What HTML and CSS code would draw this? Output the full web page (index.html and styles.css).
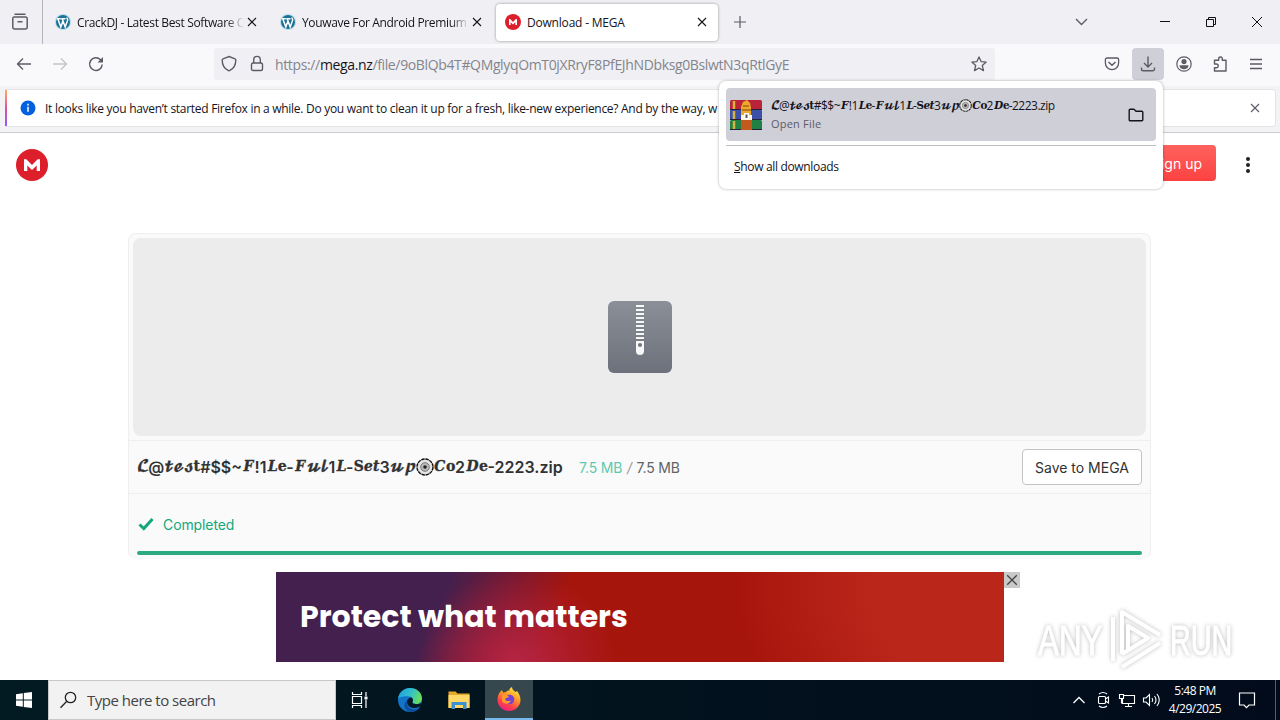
FILE: index.html
```
<!DOCTYPE html>
<html lang="en">
<head>
  <meta charset="UTF-8" />
  <title>Download - MEGA</title>
  <meta name="viewport" content="width=device-width, initial-scale=1" />
  <link rel="stylesheet" href="styles.css">
</head>
<body>
  <svg class="defs" width="0" height="0">
    <symbol id="wp" viewBox="0 0 16 16">
      <circle cx="8" cy="8" r="8" fill="#b9dbe8"/>
      <circle cx="8" cy="8" r="7" fill="#1b7296"/>
      <path d="M1.8 4.8h4M6.2 4.8h4.3M2.8 4.8l3 8.2 2.2-6.3M7.2 4.8l3 8.2 2.4-6.6c.3-1.2-.7-2-.7-2.800" fill="none" stroke="#fff" stroke-width="1.5"/>
    </symbol>
    <symbol id="mega" viewBox="0 0 32 32">
      <circle cx="16" cy="16" r="16" fill="#dd1f2b"/>
      <path d="M8 22V10.200h2.300L16 16l5.700-5.800H24V22h-3.300v-5.600L16 21l-4.700-4.600V22z" fill="#fff"/>
    </symbol>
    <symbol id="close" viewBox="0 0 10 10">
      <path d="M1 1l8 8M9 1L1 9" fill="none" stroke="currentColor" stroke-width="1.100"/>
    </symbol>
    <symbol id="gear" viewBox="0 0 18 18">
      <circle cx="9" cy="9" r="8" fill="#e4e4e4" stroke="#111" stroke-width="1.400" stroke-dasharray="3.500 .7"/>
      <circle cx="9" cy="9" r="4.300" fill="#bbb" stroke="#777"/>
      <circle cx="9" cy="9" r="1.800" fill="#222"/>
    </symbol>
  </svg>

  <div class="tabstrip">
    <div class="firefox-view">
      <svg width="18" height="18" viewBox="0 0 18 18" fill="none" stroke="#5b5b66" stroke-width="1.500"><path d="M3.500 1.300h11M1.800 5.500a1.500 1.500 0 0 1 1.500-1.500h11.400a1.500 1.500 0 0 1 1.500 1.500V14a2 2 0 0 1-2 2H3.800a2 2 0 0 1-2-2zM6.500 8.700h5"/></svg>
    </div>
    <div class="tab">
      <svg class="favicon"><use href="#wp"/></svg>
      <span class="tab-title faded">CrackDJ - Latest Best Software C</span>
      <svg class="tab-close"><use href="#close"/></svg>
    </div>
    <div class="tab">
      <svg class="favicon"><use href="#wp"/></svg>
      <span class="tab-title faded">Youwave For Android Premium</span>
      <svg class="tab-close"><use href="#close"/></svg>
    </div>
    <div class="tab active">
      <svg class="favicon"><use href="#mega"/></svg>
      <span class="tab-title">Download - MEGA</span>
      <svg class="tab-close"><use href="#close"/></svg>
    </div>
    <svg class="new-tab" width="12" height="12" viewBox="0 0 12 12"><path d="M6 0v12M0 6h12" stroke="#5b5b66" stroke-width="1.200"/></svg>
    <div class="window-buttons">
      <svg width="46" height="44" viewBox="0 0 46 44" fill="none" stroke="#5b5b66" stroke-width="1.400"><path d="M17 19l5.500 5.500L28 19"/></svg>
      <svg class="min" width="46" height="44" viewBox="0 0 46 44" stroke="#111"><path d="M18 21.500h10"/></svg>
      <svg width="46" height="44" viewBox="0 0 46 44" fill="none" stroke="#111"><path d="M18.500 19.500h7v7h-7zM20.500 19.500v-2h7v7h-2"/></svg>
      <svg width="46" height="44" viewBox="0 0 46 44" stroke="#111"><path d="M18 17l10 10M28 17L18 27"/></svg>
    </div>
  </div>

  <div class="navbar">
    <div class="nav-buttons">
      <svg width="16" height="16" viewBox="0 0 16 16" fill="none" stroke="#5b5b66" stroke-width="1.300"><path d="M15 8H1.500M7 2.500L1.500 8 7 13.500"/></svg>
      <svg width="16" height="16" viewBox="0 0 16 16" fill="none" stroke="#c3c3c8" stroke-width="1.300"><path d="M1 8h13.500M9 2.500l5.500 5.500L9 13.500"/></svg>
      <svg width="16" height="16" viewBox="0 0 16 16" fill="none" stroke="#5b5b66" stroke-width="1.500"><path d="M14.200 8.500A6.300 6.300 0 1 1 12.500 3.800L14 5.500"/><path d="M15 1v5.500H9.500z" fill="#5b5b66" stroke="none"/></svg>
    </div>
    <div class="urlbar">
      <svg width="16" height="18" viewBox="0 0 16 18" fill="none" stroke="#5b5b66" stroke-width="1.400"><path d="M8 1.500l6 2.300c.6.200.8.600.8 1.100 0 5-2.200 8.800-6.300 10.800q-.5.200-1 0C3.400 13.700 1.200 9.900 1.200 4.900c0-.5.200-.9.800-1.100z"/></svg>
      <svg width="14" height="18" viewBox="0 0 14 18" fill="none" stroke="#5b5b66" stroke-width="1.400"><rect x="1.500" y="8" width="11" height="7.500" rx="1.500"/><path d="M3.700 8V4.700a3.300 3.300 0 0 1 6.600 0V8"/></svg>
      <span class="url">https://<b>mega.nz</b>/file/9oBlQb4T#QMglyqOmT0jXRryF8PfEJhNDbksg0BslwtN3qRtlGyE</span>
      <svg class="star" width="16" height="16" viewBox="0 0 16 16" fill="none" stroke="#5b5b66" stroke-width="1.300" stroke-linejoin="round"><path d="M8 .9l2.100 4.700 5.100.5-3.900 3.400 1.200 5.100L8 12l-4.500 2.600 1.200-5.100L.8 6.100l5.100-.5z"/></svg>
    </div>
    <div class="toolbar">
      <span><svg width="16" height="16" viewBox="0 0 16 16" fill="none" stroke="#5b5b66" stroke-width="1.300"><path d="M3 2h10a1.600 1.600 0 0 1 1.600 1.600V7A6.600 6.600 0 0 1 1.400 7V3.600A1.600 1.600 0 0 1 3 2z"/><path d="M4.500 6L8 9.300 11.500 6" stroke-width="1.500"/></svg></span>
      <span class="pressed"><svg width="16" height="16" viewBox="0 0 16 16" fill="none" stroke="#5b5b66" stroke-width="1.400"><path d="M8 .5v10M4 7l4 4 4-4M1.500 11.500V13A1.800 1.800 0 0 0 3.300 14.800h9.400a1.800 1.800 0 0 0 1.800-1.800v-1.500"/></svg></span>
      <span><svg width="16" height="16" viewBox="0 0 16 16"><circle cx="8" cy="8" r="7.200" fill="none" stroke="#5b5b66" stroke-width="1.200"/><circle cx="8" cy="5.600" r="2.600" fill="#5b5b66"/><path d="M3.500 9.200h9c0 2.400-2 4-4.500 4s-4.500-1.600-4.500-4z" fill="#5b5b66"/></svg></span>
      <span><svg width="16" height="16" viewBox="0 0 16 16" fill="none" stroke="#5b5b66" stroke-width="1.400" stroke-linejoin="round"><path d="M2.500 7V4.300h4.200V2.800a1.800 1.800 0 0 1 3.600 0v1.500H14V15H2.500v-3.200h1.800a1.900 1.900 0 0 0 0-3.800H2.500z"/></svg></span>
      <span><svg width="14" height="14" viewBox="0 0 14 14" stroke="#5b5b66" stroke-width="1.300"><path d="M1 2.500h12M1 7h12M1 11.500h12"/></svg></span>
    </div>
  </div>

  <div class="notice-wrap">
    <div class="notice">
      <svg width="16" height="16" viewBox="0 0 16 16"><circle cx="8" cy="8" r="7.500" fill="#0560df"/><path d="M8 6.800v5M8 3.700v1.700" stroke="#fff" stroke-width="1.500"/></svg>
      <span class="notice-text">It looks like you haven’t started Firefox in a while. Do you want to clean it up for a fresh, like-new experience? And by the way, w</span>
      <svg class="notice-close"><use href="#close"/></svg>
    </div>
  </div>

  <div class="page">
    <div class="page-header">
      <svg class="logo"><use href="#mega"/></svg>
      <div class="header-right">
        <div class="signup">Sign up</div>
        <svg width="6" height="18" viewBox="0 0 6 18" fill="#222"><circle cx="3" cy="3" r="2"/><circle cx="3" cy="9" r="2"/><circle cx="3" cy="15" r="2"/></svg>
      </div>
    </div>

    <div class="card">
      <div class="preview">
        <svg width="64" height="72" viewBox="0 0 64 72">
          <defs><linearGradient id="zg" x1="0" y1="0" x2="0" y2="1"><stop offset="0" stop-color="#8b8f97"/><stop offset="1" stop-color="#6c717b"/></linearGradient></defs>
          <rect width="64" height="72" rx="6" fill="url(#zg)"/>
          <path d="M32 4v36" stroke="#f7f7f8" stroke-width="8" stroke-dasharray="2 2"/>
          <path d="M28 40h8v10a4 4 0 0 1-8 0z" fill="#f7f7f8"/>
          <circle cx="32" cy="44" r="2" fill="#6f747d"/>
        </svg>
      </div>
      <div class="file-row">
        <span class="file-name"><i>𝓛</i>@<i>𝓽𝓮𝓼𝐭</i>#$$~<i>𝑭</i>!1<i>𝑳𝐞</i>-<i>𝑭𝓾𝓵</i>1<i>𝑳</i>-<i>𝐒𝒆𝒕</i>3<i>𝓾𝓹</i><svg class="gear"><use href="#gear"/></svg><i>𝑪𝐨</i>2<i>𝑫𝐞</i>-2223.zip</span>
        <span class="file-size"><em>7.5 MB</em> <i>/</i> 7.5 MB</span>
        <div class="save">Save to MEGA</div>
      </div>
      <div class="status">
        <svg width="16" height="14" viewBox="0 0 16 14" fill="none" stroke="#12a87c" stroke-width="3"><path d="M1.500 7.500l4.300 4L14.500 2"/></svg>
        <span>Completed</span>
      </div>
      <div class="progress"></div>
    </div>

    <div class="ad">
      <div class="banner">Protect what matters</div>
      <div class="ad-close"><svg width="12" height="12" viewBox="0 0 10 10"><use href="#close"/></svg></div>
    </div>
  </div>

  <div class="watermark">
    <span class="any">ANY</span>
    <svg width="58" height="64" viewBox="0 0 58 64" fill="none" stroke="#fff" stroke-width="4" stroke-linejoin="round"><path d="M15 46V4l38 23M15 46l26-16L21 18v24M6 9v44M15 59l38-24"/></svg>
    <span class="run">RUN</span>
  </div>

  <div class="downloads">
    <div class="download-item">
      <svg width="32" height="32" viewBox="0 0 32 32">
        <rect y="1" width="32" height="10" rx="1.500" fill="#b92438"/>
        <rect y="11" width="32" height="10" rx="1" fill="#3c50a8"/>
        <rect y="21" width="32" height="10" rx="1.500" fill="#218044"/>
        <path d="M4 2v8M4 12v8M4 22v8" stroke="#d8b23c" stroke-width="2.500"/>
        <path d="M0 10.500h32M0 20.500h32M0 30.500h32" stroke="#25203a"/>
        <path d="M11 20h11v11H11z" fill="#c35a1d"/>
        <path d="M13 3l4-2 3 3 1 5v8H11V8z" fill="#edaa28"/>
        <path d="M13 6h6v2h-6zM12 10h9v2h-9z" fill="#b77522"/>
        <path d="M11 16h11v5H11z" fill="#fff3dc"/>
        <path d="M14 14h5v6h-5z" fill="#fff"/>
        <path d="M15.500 15.500h2V19h-2z" fill="#555"/>
      </svg>
      <div class="download-text">
        <span class="download-name"><i>𝓛</i>@<i>𝓽𝓮𝓼𝐭</i>#$$~<i>𝑭</i>!1<i>𝑳𝐞</i>-<i>𝑭𝓾𝓵</i>1<i>𝑳</i>-<i>𝐒𝒆𝒕</i>3<i>𝓾𝓹</i><svg class="gear"><use href="#gear"/></svg><i>𝑪𝐨</i>2<i>𝑫𝐞</i>-2223.zip</span>
        <span class="download-open">Open File</span>
      </div>
      <svg class="folder" width="16" height="16" viewBox="0 0 16 16" fill="none" stroke="#15141a" stroke-width="1.400" stroke-linejoin="round"><path d="M1.200 3.200a1 1 0 0 1 1-1H6l2 2h5.800a1 1 0 0 1 1 1v7.500a1 1 0 0 1-1 1H2.200a1 1 0 0 1-1-1z"/></svg>
    </div>
    <div class="show-all"><u>S</u>how all downloads</div>
  </div>

  <div class="taskbar">
    <div class="start"><svg width="16" height="16" viewBox="0 0 16 16" fill="#fff"><path d="M0 2.200l6.800-1v6.300H0zM7.800 1L16 0v7.500H7.800zM0 8.500h6.800v6.300L0 13.800zM7.800 8.500H16V16l-8.200-1z"/></svg></div>
    <div class="search">
      <svg width="18" height="18" viewBox="0 0 18 18" fill="none" stroke="#222" stroke-width="1.300"><circle cx="10.500" cy="6.500" r="5.200"/><path d="M6.800 10.300L.5 16.800"/></svg>
      <span>Type here to search</span>
    </div>
    <div class="task"><svg width="18" height="18" viewBox="0 0 18 18" fill="none" stroke="#fff" stroke-width="1.200"><path d="M1.500 5.500h9v7h-9zM1.500 1v2.500h9V1M1.500 17v-2.500h9V17M15 1v4M15 9v8"/><path d="M13.500 5.500h3v3h-3z" fill="#fff" stroke="none"/></svg></div>
    <div class="task"><svg width="24" height="24" viewBox="0 0 24 24">
      <defs>
        <linearGradient id="eg" x1="0" y1="0" x2="1" y2=".3"><stop offset="0" stop-color="#1b9de2"/><stop offset=".6" stop-color="#35c1c8"/><stop offset="1" stop-color="#66dd62"/></linearGradient>
      </defs>
      <circle cx="12" cy="12" r="12" fill="#1373c9"/>
      <path d="M0 11C1 4 6 0 12 0c7 0 12 5 12 10.500 0 3.500-3 5.500-6 5.500-2.500 0-4-1-3.500-2 1-1.500.5-5-3.500-5.500C6 8 1 9 0 11z" fill="url(#eg)"/>
      <path d="M9 12c-1.500 5 2 9.500 7 9.500 2.500 0 4.500-1 6-2-2.500 3.500-6 4.500-10 4.500-5-1.500-8-7-3-12z" fill="#0c4d9c"/>
      <path d="M14.500 14c1-1.500.5-3.500-1-4.500-3 0-5 2.500-4.300 5.500C10 19 14 20.500 18 19.800c2-.3 4-1.300 5-2.300l1-3c-1.500 1-3.500 2-6 1.500-2.500 0-4-1-3.500-2z" fill="#041b27"/>
    </svg></div>
    <div class="task"><svg width="22" height="20" viewBox="0 0 22 20"><path d="M.5 1.500h7l2 2h12V18H.5z" fill="#e9a82c"/><path d="M.5 5h21v13H.5z" fill="#ffd868"/><path d="M3.500 19v-7h15v7h-3.500v-4H7v4z" fill="#3d91d1"/></svg></div>
    <div class="task running"><svg width="24" height="24" viewBox="0 0 24 24">
      <defs><linearGradient id="fg" x1=".8" y1="0" x2=".3" y2="1"><stop offset="0" stop-color="#fff04a"/><stop offset=".4" stop-color="#ff9a26"/><stop offset=".75" stop-color="#ff3f4c"/><stop offset="1" stop-color="#e3228a"/></linearGradient></defs>
      <path d="M3 5l2-2 1 2.500L9 5c1-1 2-1.500 3.500-1.700C12 2 13.500.8 15 0c0 2.500 2 3.500 3.500 5L20 4c2 2.500 3.500 5.500 3.500 9A11.500 11 0 1 1 .5 13C.5 9.500 1.500 7 3 5z" fill="url(#fg)"/>
      <circle cx="12.500" cy="12.500" r="4.800" fill="#7542d8"/>
      <path d="M5 8c3-1 5 0 7 1.500-1 1.500-3 1-4 2.500 1 2.500 4 2.500 6 1.500-1.500 4-6.500 4-9 1z" fill="#ff982d"/>
    </svg></div>
    <div class="tray">
      <svg width="24" height="24" viewBox="0 0 24 24" fill="none" stroke="#fff" stroke-width="1.300"><path d="M6.500 15L12 9.500l5.500 5.500"/></svg>
      <svg width="24" height="24" viewBox="0 0 24 24" fill="none" stroke="#fff" stroke-width="1.100"><rect x="7.500" y="8.500" width="7" height="7" rx="1"/><path d="M14.500 11l3-2v6l-3-2M8 6q4-3 8 0M8 18q4 3 8 0"/></svg>
      <svg width="24" height="24" viewBox="0 0 24 24" fill="none" stroke="#fff" stroke-width="1.100"><path d="M8.500 7.500h11v8h-12V11M13.500 15.500v3M10 18.500h7M4.500 6.500h4v4h-4zM6.500 10.500v5"/></svg>
      <svg width="24" height="24" viewBox="0 0 24 24" fill="none" stroke="#fff" stroke-width="1.100"><path d="M4.500 10h2.500l3.500-3.500v11L7 14H4.500zM13 10q1.500 2 0 4M15.500 8q3 4 0 8M18 6q4.500 6 0 12"/></svg>
      <div class="clock"><span>5:48 PM</span><span>4/29/2025</span></div>
      <svg class="action" width="18" height="18" viewBox="0 0 18 18" fill="none" stroke="#fff" stroke-width="1.200"><path d="M1.500 2h15v12H11l-2.500 2.700L6 14H1.500z"/></svg>
      <div class="show-desktop"></div>
    </div>
  </div>
</body>
</html>
```

FILE: styles.css
```
* {
  box-sizing: border-box;
}
body {
  margin: 0;
  width: 1280px;
  height: 720px;
  overflow: hidden;
  position: relative;
  display: flex;
  flex-direction: column;
  background: #fff;
  color: #15141a;
  font-family: "Open Sans", "Noto Sans", sans-serif;
  font-size: 12px;
}
svg {
  flex: none;
  display: block;
}
.defs {
  position: absolute;
}

/* tabs */
.tabstrip {
  height: 44px;
  flex: none;
  display: flex;
  align-items: center;
  background: #f0f0f4;
}
.firefox-view {
  width: 43px;
  height: 44px;
  margin-right: 3px;
  padding: 0 0 0 11px;
  display: flex;
  align-items: center;
  border-right: 1px solid #b4b4ba;
}
.tab {
  width: 222px;
  height: 37px;
  margin-right: 3px;
  padding: 0 11px 0 9px;
  display: flex;
  align-items: center;
  border-radius: 4px;
}
.tab.active {
  background: #fff;
  box-shadow: 0 0 3px #0006;
}
.favicon {
  width: 16px;
  height: 16px;
  margin-right: 6px;
}
.tab-title {
  flex: 1;
  white-space: nowrap;
  letter-spacing: -0.2px;
}
.faded {
  letter-spacing: -0.35px;
  -webkit-mask-image: linear-gradient(to left, transparent, #000 18px);
  mask-image: linear-gradient(to left, transparent, #000 18px);
}
.tab-close {
  width: 10px;
  height: 10px;
  margin-left: 3px;
}
.new-tab {
  margin-left: 13px;
}
.window-buttons {
  margin-left: auto;
  display: flex;
}
.window-buttons .min {
  margin-left: 37px;
}

/* navigation */
.navbar {
  height: 42px;
  flex: none;
  display: flex;
  align-items: center;
  background: #f9f9fb;
  padding: 0 8px 2px 16px;
}
.nav-buttons {
  width: 198px;
  display: flex;
  gap: 20px;
}
.urlbar {
  width: 781px;
  height: 32px;
  padding: 0 8px 0 7px;
  display: flex;
  align-items: center;
  background: #f0f0f4;
  border-radius: 3px;
}
.urlbar svg + svg {
  margin-left: 13px;
}
.url {
  flex: 1;
  margin-left: 11px;
  font-size: 14px;
  letter-spacing: -0.36px;
  color: #84848c;
  white-space: nowrap;
}
.url b {
  font-weight: 400;
  color: #15141a;
}
.toolbar {
  margin-left: auto;
  display: flex;
  gap: 4px;
}
.toolbar span {
  width: 32px;
  height: 32px;
  display: flex;
  align-items: center;
  justify-content: center;
  border-radius: 4px;
}
.toolbar .pressed {
  background: #cfcfd8;
}

/* notification bar */
.notice-wrap {
  height: 47px;
  flex: none;
  padding: 3px 4px 5px 5px;
  background: #f3f3f5;
  border-bottom: 1px solid #ccccd0;
}
.notice {
  height: 38px;
  padding: 0 15px 0 15px;
  display: flex;
  align-items: center;
  background: linear-gradient(#ffab5c, #e0529c 50%, #9059ff) 0 0 / 2px 100% no-repeat #fff;
  border: 1px solid #e4e4e8;
  border-left: 0;
  border-radius: 0 4px 4px 0;
}
.notice-text {
  flex: 1;
  margin-left: 9px;
  letter-spacing: -0.285px;
  white-space: nowrap;
}
.notice svg:first-child {
  margin-top: -1px;
}
.notice-close {
  width: 10px;
  height: 10px;
  color: #5b5b66;
}

/* page */
.page {
  flex: 1;
  font-family: Inter, sans-serif;
  font-size: 14px;
}
.page-header {
  height: 64px;
  padding: 0 29px 0 16px;
  display: flex;
  align-items: center;
  justify-content: space-between;
}
.logo {
  width: 32px;
  height: 32px;
}
.header-right {
  display: flex;
  align-items: center;
  gap: 29px;
}
.signup {
  width: 78px;
  height: 36px;
  margin-top: -4px;
  padding-right: 14px;
  line-height: 37px;
  text-align: right;
  color: #fff;
  background: linear-gradient(#ff625e, #fb4241);
  border-radius: 4px;
}
.card {
  width: 1023px;
  height: 326px;
  margin: 36px 0 0 128px;
  padding: 4px 0;
  background: #fafafa;
  border: 1px solid #efefef;
  border-bottom-color: #f8f8f8;
  border-radius: 8px;
}
.preview {
  height: 198px;
  margin: 0 4px;
  display: flex;
  align-items: center;
  justify-content: center;
  background: #ececec;
  border-radius: 8px;
}
.file-row {
  height: 54px;
  margin-top: 4px;
  padding: 0 8px;
  display: flex;
  align-items: center;
  border-top: 1px solid #efefef;
  border-bottom: 1px solid #efefef;
}
.file-name {
  width: 442px;
  display: flex;
  align-items: center;
  font-size: 16px;
  font-weight: 600;
  color: #303233;
  white-space: nowrap;
}
/* styled letters of the file name */
.file-name i,
.download-name i {
  font-family: "DejaVu Math TeX Gyre", serif;
  font-style: normal;
}
.file-name i {
  font-size: 14px;
  letter-spacing: -0.87px;
  -webkit-text-stroke: 0.3px #303233;
}
.file-name .gear {
  width: 18px;
  height: 18px;
}
.file-size {
  color: #616366;
  letter-spacing: -0.18px;
}
.file-size em {
  font-style: normal;
  color: #5dcbb0;
}
.file-size i {
  color: #999;
  margin: 0 1px;
}
.save {
  width: 120px;
  height: 36px;
  margin-left: auto;
  line-height: 35px;
  text-align: center;
  color: #303233;
  background: #fff;
  border: 1px solid #c4c4c4;
  border-radius: 4px;
}
.status {
  height: 57px;
  padding: 3px 9px 0;
  display: flex;
  align-items: center;
  gap: 9px;
  color: #12a87c;
  letter-spacing: -0.1px;
}
.progress {
  height: 4px;
  margin: 0 8px;
  background: #2dab80;
  border-radius: 2px;
}
.ad {
  margin: 13px 0 0 276px;
  display: flex;
}
.banner {
  width: 728px;
  height: 90px;
  padding-left: 24px;
  line-height: 90px;
  font-family: Poppins, Inter, sans-serif;
  font-size: 30px;
  font-weight: 700;
  color: #fff;
  background:
    radial-gradient(ellipse 100px 90px at 240px 90px, #b52445, #b5244500),
    radial-gradient(ellipse 300px 200px at 760px 20px, #bb261b 55%, #bb261b00),
    linear-gradient(112deg, #44204e 23%, #761932 31%, #a6150c 39%);
}
.ad-close {
  width: 16px;
  height: 16px;
  padding: 2px;
  color: #444;
  background: #c9c9c9;
}

/* watermark over the page */
.watermark {
  position: absolute;
  left: 1038px;
  top: 608px;
  display: flex;
  align-items: center;
  gap: 5px;
  color: #fff;
  font-family: "Liberation Sans", sans-serif;
  font-size: 43px;
  -webkit-text-stroke: 1px #fff;
  filter: drop-shadow(0 0 2px #0004);
}
.watermark span {
  width: 64px;
  transform-origin: 0 50%;
}
.watermark .any {
  transform: scaleX(.73);
}
.watermark .run {
  transform: scaleX(.67);
}

/* downloads popup */
.downloads {
  position: absolute;
  left: 719px;
  top: 81px;
  width: 444px;
  height: 108px;
  padding: 7px;
  background: #fff;
  border-radius: 7px;
  box-shadow: 0 0 3px #0005;
}
.download-item {
  height: 53px;
  padding: 0 12px 0 4px;
  display: flex;
  align-items: center;
  background: #cfcfd8;
  border-radius: 4px;
}
.download-text {
  flex: 1;
  margin-left: 9px;
  display: flex;
  flex-direction: column;
}
.download-name {
  height: 17px;
  display: flex;
  align-items: center;
  letter-spacing: -0.5px;
  white-space: nowrap;
}
.download-name i {
  font-size: 10.5px;
  letter-spacing: -1.25px;
}
.download-name .gear {
  width: 13px;
  height: 13px;
}
.download-open {
  margin-top: 2px;
  font-size: 11px;
  line-height: 16px;
  letter-spacing: 0.2px;
  color: #5b5b66;
}
.show-all {
  height: 41px;
  margin-top: 4px;
  padding-left: 8px;
  line-height: 42px;
  letter-spacing: -0.33px;
  border-top: 1px solid #bcbcc2;
}

/* windows taskbar */
.taskbar {
  height: 40px;
  flex: none;
  display: flex;
  color: #fff;
  background: linear-gradient(to right, #021a21, #02131e 50%, #020b1b);
}
.start {
  width: 48px;
  display: flex;
  align-items: center;
  justify-content: center;
}
.search {
  width: 288px;
  padding-left: 11px;
  display: flex;
  align-items: center;
  gap: 9px;
  background: #f2f2f2;
  border: 1px solid #c8c8c8;
  color: #444;
  font-size: 15px;
  letter-spacing: -0.5px;
}
.task {
  width: 48px;
  margin-right: 1.700px;
  display: flex;
  align-items: center;
  justify-content: center;
}
.running {
  background: #37474e;
  border-bottom: 2px solid #76b9ed;
}
.tray {
  margin-left: auto;
  display: flex;
  align-items: center;
}
.clock {
  width: 64px;
  display: flex;
  flex-direction: column;
  align-items: center;
  line-height: 18px;
  letter-spacing: -0.5px;
}
.action {
  margin: 0 19px 0 11px;
}
.show-desktop {
  width: 5px;
  height: 40px;
  border-left: 1px solid #56606b;
}
```
